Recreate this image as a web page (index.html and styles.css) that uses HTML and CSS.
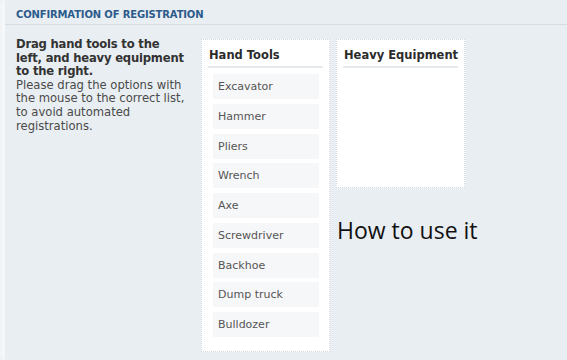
FILE: index.html
```html
<!DOCTYPE html>
<html lang="en">
<head>
    <meta charset="UTF-8">
    <title>Confirmation of Registration</title>
    <link rel="stylesheet" href="styles.css">
</head>
<body>
    <div class="panel">
        <!-- Titulo de la seccion -->
        <h2 class="panel-title">CONFIRMATION OF REGISTRATION</h2>

        <div class="panel-body">
            <div class="instructions">
                <strong>Drag hand tools to the left, and heavy equipment to the right.</strong>
                Please drag the options with the mouse to the correct list, to avoid automated registrations.
            </div>

            <!-- Lista de herramientas manuales -->
            <div class="drop-list hand">
                <div class="list-title">Hand Tools</div>
                <ul class="items">
                    <li>Excavator</li>
                    <li>Hammer</li>
                    <li>Pliers</li>
                    <li>Wrench</li>
                    <li>Axe</li>
                    <li>Screwdriver</li>
                    <li>Backhoe</li>
                    <li>Dump truck</li>
                    <li>Bulldozer</li>
                </ul>
            </div>

            <div class="right-col">
                <!-- Lista de maquinaria pesada -->
                <div class="drop-list heavy">
                    <div class="list-title">Heavy Equipment</div>
                    <ul class="items"></ul>
                </div>
                <p class="howto">How to use it</p>
            </div>
        </div>
    </div>
</body>
</html>
```

FILE: styles.css
```css
* {
    margin: 0;
    padding: 0;
    box-sizing: border-box;
}

body {
    background: #e9eef2;
    font-family: "DejaVu Sans", Verdana, sans-serif;
    color: #333;
    height: 360px;
    overflow: hidden;
}

.panel {
    margin-left: 5px;
    height: 360px;
    background: #e9eef2;
    box-shadow: -5px 0 5px #f6f8fa;
}

.panel-title {
    font-size: 10px;
    font-weight: bold;
    color: #2c5b8c;
    letter-spacing: -0.15px;
    padding: 9px 0 0 11px;
    height: 25px;
    border-bottom: 1px solid #d5dde3;
}

.panel-body {
    display: flex;
    padding: 10px 0 0 11px;
}

.instructions {
    width: 180px;
    padding-top: 3px;
    font-size: 11.6px;
    line-height: 13.6px;
    color: #4a4a4a;
}

.instructions strong {
    display: block;
    max-width: 171px;
    color: #333;
    letter-spacing: -0.2px;
}

.drop-list {
    background: #fff;
    border: 1px dotted #d3d9de;
    padding: 8px 6px 0 6px;
    width: 129px;
    margin-top: 4px;
}

.drop-list.hand {
    height: 313px;
    margin-left: 5px;
}

.drop-list.heavy {
    height: 149px;
}

.list-title {
    font-size: 11.5px;
    font-weight: bold;
    white-space: nowrap;
    color: #2b2b2b;
    padding: 0 0 4px 1px;
    border-bottom: 2px solid #e8ebee;
}

.items {
    list-style: none;
    padding: 6px 4px 0 5px;
}

.items li {
    background: #f6f7f8;
    height: 25px;
    line-height: 25px;
    margin-bottom: 4.75px;
    padding-left: 5px;
    font-size: 11px;
    color: #555;
}

.right-col {
    margin-left: 6px;
}

.howto {
    font-family: "Open Sans", "Noto Sans", sans-serif;
    font-size: 23px;
    color: #111;
    margin-top: 26px;
    padding-left: 1px;
}
```
